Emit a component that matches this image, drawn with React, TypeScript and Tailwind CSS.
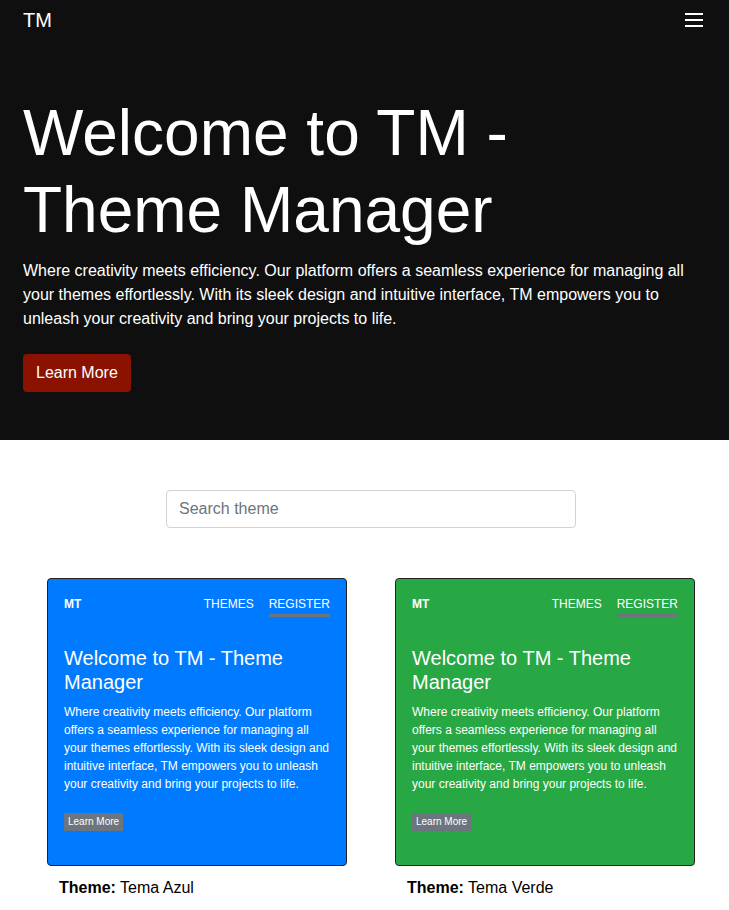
import React from "react";

function ThemeCard({ bg, name }: { bg: string; name: string }) {
  return (
    <div className="w-[300px]">
      <div className={`${bg} w-[300px] h-[288px] border border-[#222] rounded-[4px] px-[16px] pt-[19px] text-white`}>
        <div className="flex items-start justify-between h-[19px]">
          <span className="text-[12px] font-bold leading-none">MT</span>
          <div className="flex gap-[15px] text-[12px] leading-none">
            <span className="pb-[4px] border-b-[3px] border-transparent">THEMES</span>
            <span className="pb-[4px] border-b-[3px] border-[#6c757d]">REGISTER</span>
          </div>
        </div>
        <h2 className="mt-[29px] text-[20px] leading-[24px]">Welcome to TM - Theme Manager</h2>
        <p className="mt-[9px] text-[12px] leading-[18px]">
          Where creativity meets efficiency. Our platform offers a seamless experience for managing all your themes effortlessly. With its sleek design and intuitive interface, TM empowers you to unleash your creativity and bring your projects to life.
        </p>
        <button className="mt-[20px] bg-[#6c757d] text-white text-[10px] h-[18px] px-[4px] leading-[18px]">Learn More</button>
      </div>
      <div className="mt-[12px] pl-[12px] text-[16px] leading-[20px] text-black">
        <span className="font-bold">Theme:</span> {name}
      </div>
    </div>
  );
}

export default function App() {
  return (
    <div className="min-h-[910px] bg-white" style={{ fontFamily: '"Liberation Sans", Arial, sans-serif' }}>
      <header className="bg-[#0f0f0f] h-[440px] text-white">
        <nav className="flex items-center justify-between h-[40px] pl-[23px] pr-[26px]">
          <span className="text-[20px] leading-none">TM</span>
          <svg width="18" height="14" viewBox="0 0 18 14" fill="none">
            <rect x="0" y="0" width="18" height="2" fill="white" />
            <rect x="0" y="6" width="18" height="2" fill="white" />
            <rect x="0" y="12" width="18" height="2" fill="white" />
          </svg>
        </nav>
        <div className="pl-[23px] pr-[23px] pt-[55px]">
          <h1 className="text-[64px] leading-[77px] font-normal">Welcome to TM - Theme Manager</h1>
          <p className="mt-[10px] text-[16px] leading-[24px]">
            Where creativity meets efficiency. Our platform offers a seamless experience for managing all your themes effortlessly. With its sleek design and intuitive interface, TM empowers you to unleash your creativity and bring your projects to life.
          </p>
          <button className="mt-[23px] bg-[#8b1200] text-white text-[16px] h-[38px] px-[13px] rounded-[4px]">Learn More</button>
        </div>
      </header>
      <div className="pt-[50px] pl-[166px]">
        <input
          placeholder="Search theme"
          className="block w-[410px] h-[38px] border border-[#ced4da] rounded-[4px] px-[12px] text-[16px] placeholder:text-[#6c757d] outline-none"
        />
      </div>
      <div className="flex gap-[48px] pl-[47px] pt-[50px]">
        <ThemeCard bg="bg-[#007bff]" name="Tema Azul" />
        <ThemeCard bg="bg-[#28a745]" name="Tema Verde" />
      </div>
    </div>
  );
}
